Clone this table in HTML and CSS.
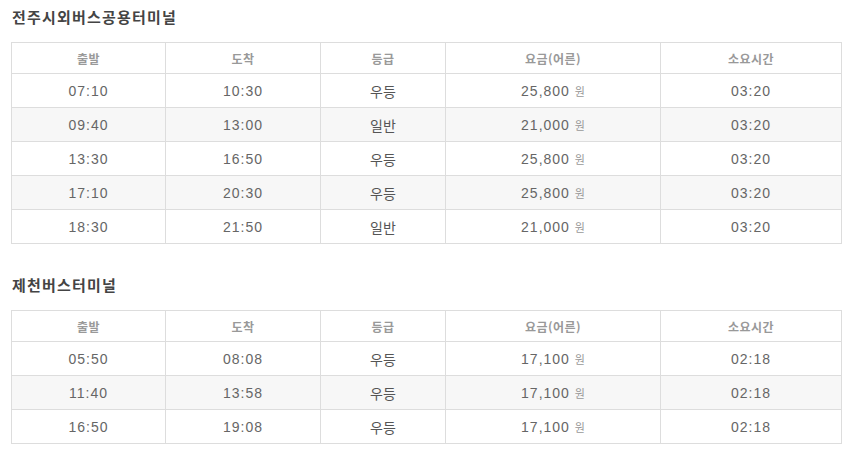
FILE: index.html
```html
<!DOCTYPE html>
<html lang="ko">
<head>
<meta charset="utf-8">
<link rel="stylesheet" href="styles.css">
</head>
<body>
<div class="page">
  <section class="terminal">
    <h3 class="title">전주시외버스공용터미널</h3>
    <table class="schedule">
      <colgroup><col class="c1"><col class="c2"><col class="c3"><col class="c4"><col class="c5"></colgroup>
      <thead><tr><th>출발</th><th>도착</th><th>등급</th><th>요금(어른)</th><th>소요시간</th></tr></thead>
      <tbody>
        <tr><td class="num">07:10</td><td class="num">10:30</td><td>우등</td><td class="num">25,800 <span class="won">원</span></td><td class="num">03:20</td></tr>
        <tr><td class="num">09:40</td><td class="num">13:00</td><td>일반</td><td class="num">21,000 <span class="won">원</span></td><td class="num">03:20</td></tr>
        <tr><td class="num">13:30</td><td class="num">16:50</td><td>우등</td><td class="num">25,800 <span class="won">원</span></td><td class="num">03:20</td></tr>
        <tr><td class="num">17:10</td><td class="num">20:30</td><td>우등</td><td class="num">25,800 <span class="won">원</span></td><td class="num">03:20</td></tr>
        <tr><td class="num">18:30</td><td class="num">21:50</td><td>일반</td><td class="num">21,000 <span class="won">원</span></td><td class="num">03:20</td></tr>
      </tbody>
    </table>
  </section>
  <section class="terminal">
    <h3 class="title">제천버스터미널</h3>
    <table class="schedule">
      <colgroup><col class="c1"><col class="c2"><col class="c3"><col class="c4"><col class="c5"></colgroup>
      <thead><tr><th>출발</th><th>도착</th><th>등급</th><th>요금(어른)</th><th>소요시간</th></tr></thead>
      <tbody>
        <tr><td class="num">05:50</td><td class="num">08:08</td><td>우등</td><td class="num">17,100 <span class="won">원</span></td><td class="num">02:18</td></tr>
        <tr><td class="num">11:40</td><td class="num">13:58</td><td>우등</td><td class="num">17,100 <span class="won">원</span></td><td class="num">02:18</td></tr>
        <tr><td class="num">16:50</td><td class="num">19:08</td><td>우등</td><td class="num">17,100 <span class="won">원</span></td><td class="num">02:18</td></tr>
      </tbody>
    </table>
  </section>
</div>
</body>
</html>
```
FILE: styles.css
```css
html, body {
  margin: 0;
  padding: 0;
  background: #fff;
}
body {
  font-family: "Liberation Sans", "Noto Sans CJK KR", sans-serif;
  color: #555;
}
.page {
  padding: 7px 11px 0 11px;
  display: flex;
  flex-direction: column;
  gap: 31px;
}
.title {
  margin: 0 0 15px 1px;
  font-family: "Noto Sans CJK KR", sans-serif;
  font-size: 15px;
  line-height: 20px;
  font-weight: bold;
  color: #444;
  letter-spacing: 1.2px;
}
.schedule {
  border-collapse: collapse;
  table-layout: fixed;
  width: 830px;
}
.c1 { width: 154px; }
.c2 { width: 155px; }
.c3 { width: 125px; }
.c4 { width: 215px; }
.c5 { width: 181px; }
.schedule th,
.schedule td {
  border: 1px solid #ddd;
  text-align: center;
  padding: 0;
}
.schedule th {
  height: 30px;
  font-family: "Noto Sans CJK KR", sans-serif;
  font-size: 12px;
  font-weight: bold;
  color: #999;
  letter-spacing: 0.5px;
}
.schedule td {
  height: 33px;
  font-family: "Noto Sans CJK KR", sans-serif;
  font-size: 14px;
  color: #555;
}
.schedule td.num {
  font-family: "Liberation Sans", "Noto Sans CJK KR", sans-serif;
  letter-spacing: 1px;
  color: #666;
}
.schedule tbody tr:nth-child(even) td {
  background: #f7f7f7;
}
.won {
  font-family: "Noto Sans CJK KR", sans-serif;
  font-size: 11px;
  color: #999;
  letter-spacing: 0;
}
```
